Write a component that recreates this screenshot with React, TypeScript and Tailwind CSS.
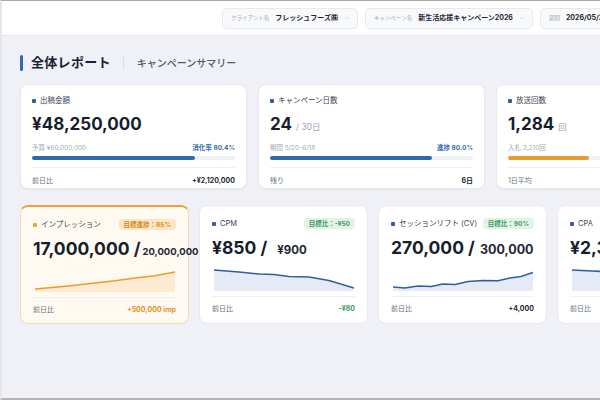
import { ChevronDown } from "lucide-react"

const font = { fontFamily: '"Inter", "Noto Sans CJK JP", sans-serif' }

function Pill({ label, value }: { label: string; value: string }) {
  return (
    <div className="flex h-[21px] shrink-0 items-center gap-[6px] rounded-[5px] border border-[#e6e9ef] bg-[#f8f9fb] pl-[8px] pr-[7px]">
      <span className="text-[5.5px] text-[#a3aab7]">{label}</span>
      <span className="text-[7px] font-bold text-[#1f2736]">{value}</span>
      <ChevronDown className="h-[6px] w-[6px] text-[#b5bcc8]" strokeWidth={2} />
    </div>
  )
}

function Dot({ color }: { color: string }) {
  return <span className={`h-[4px] w-[4px] shrink-0 rounded-[1px] ${color}`} />
}

type TopCardProps = {
  label: string
  big: string
  unit?: string
  subLeft: string
  subRight?: string
  pct: number
  barColor: string
  footLeft: string
  footRight?: string
}

function TopCard(p: TopCardProps) {
  return (
    <div className="flex h-[105px] w-[227px] shrink-0 flex-col rounded-[8px] border border-[#e7e9ee] bg-white px-[11px] pt-[11px] shadow-[0_1px_2px_rgba(20,30,50,0.04)]">
      <div className="flex items-center gap-[4px]">
        <Dot color="bg-[#2f5f9e]" />
        <span className="text-[7.5px] leading-[10px] text-[#3b4454]">{p.label}</span>
      </div>
      <div className="mt-[6px] flex items-baseline gap-[4px]">
        <span className="text-[17px] font-bold leading-[24px] text-[#161e2d]">{p.big}</span>
        {p.unit && <span className="text-[8.5px] text-[#9aa2b0]">{p.unit}</span>}
      </div>
      <div className="mt-[7px] flex items-center justify-between text-[6.5px] leading-[10px]">
        <span className="text-[#a3aab7]">{p.subLeft}</span>
        {p.subRight && <span className="font-bold text-[#2f6aad]">{p.subRight}</span>}
      </div>
      <div className="mt-[3px] h-[3.5px] w-full rounded-full bg-[#eef1f5]">
        <div className={`h-full rounded-full ${p.barColor}`} style={{ width: `${p.pct}%` }} />
      </div>
      <div className="mt-[7px] border-t border-[#eef0f3]" />
      <div className="mt-[8px] flex items-center justify-between text-[7px] leading-[10px]">
        <span className="text-[#6b7484]">{p.footLeft}</span>
        {p.footRight && <span className="font-bold text-[#1f2736]">{p.footRight}</span>}
      </div>
    </div>
  )
}

type KpiProps = {
  label: string
  badge: string
  badgeClass: string
  big: string
  target: string
  targetClass: string
  points: string
  line: string
  fill: string
  footRight: string
  footClass: string
  dot: string
  highlight?: boolean
}

function KpiCard(p: KpiProps) {
  const area = `0,22 ${p.points} 140,22`
  return (
    <div
      className={`flex h-[119px] w-[169px] shrink-0 flex-col rounded-[8px] border px-[12px] pt-[12px] ${
        p.highlight
          ? "border-[#f1dcb6] border-t-[2px] border-t-[#eba43c] bg-[#fffaf1] pt-[10px]"
          : "border-[#e7e9ee] bg-white"
      }`}
    >
      <div className="flex items-center justify-between">
        <div className="flex items-center gap-[4px]">
          <Dot color={p.dot} />
          <span className="text-[7.5px] leading-[10px] text-[#3b4454]">{p.label}</span>
        </div>
        <span className={`rounded-[3px] px-[5px] py-[1.5px] text-[6.5px] font-bold leading-[8px] ${p.badgeClass}`}>{p.badge}</span>
      </div>
      <div className="mt-[7px] flex items-baseline whitespace-nowrap">
        <span className="text-[17.5px] font-bold leading-[24px] text-[#161e2d]">{p.big}</span>
        <span className={`font-bold text-[#1f2736] ${p.targetClass}`}>{p.target}</span>
      </div>
      <svg viewBox="0 0 140 22" className="mt-[9px] ml-[2px] h-[22px] w-[140px]" preserveAspectRatio="none">
        <polygon points={area} fill={p.fill} />
        <polyline points={p.points} fill="none" stroke={p.line} strokeWidth="1.6" strokeLinejoin="round" strokeLinecap="round" />
      </svg>
      <div className="mt-[5px] border-t border-[#eef0f3]" />
      <div className="mt-[7px] flex items-center justify-between text-[7px] leading-[10px]">
        <span className="text-[#6b7484]">前日比</span>
        <span className={`font-bold ${p.footClass}`}>{p.footRight}</span>
      </div>
    </div>
  )
}

export default function App() {
  return (
    <div style={font} className="h-[400px] w-[600px] overflow-hidden border-t border-b-2 border-l-2 border-t-[#a8a8a8] border-b-[#b4b4b4] border-l-[#e4e6ea] bg-[#eff1f6]">
      {/* header */}
      <div className="flex h-[35px] items-center gap-[7px] border-b border-[#e6e8ed] bg-white pl-[220px]">
        <Pill label="クライアント名" value="フレッシュフーズ㈱" />
        <Pill label="キャンペーン名" value="新生活応援キャンペーン2026" />
        <Pill label="期間" value="2026/05/20 - 2026/06/18" />
      </div>

      <div className="w-[760px] px-[18px]">
        {/* title */}
        <div className="mt-[19px] flex h-[16px] items-center">
          <span className="h-[16px] w-[3px] rounded-full bg-[#2f6aad]" />
          <span className="ml-[8px] text-[13px] font-bold tracking-[0.3px] text-[#1a2231]">全体レポート</span>
          <span className="ml-[12px] h-[12px] w-px bg-[#d9dce2]" />
          <span className="ml-[13px] text-[10px] font-medium text-[#4f5868]">キャンペーンサマリー</span>
        </div>

        {/* row 1 */}
        <div className="mt-[13px] flex gap-[11px]">
          <TopCard
            label="出稿金額"
            big="¥48,250,000"
            subLeft="予算 ¥60,000,000"
            subRight="消化率 80.4%"
            pct={80.4}
            barColor="bg-[#2f6aad]"
            footLeft="前日比"
            footRight="+¥2,120,000"
          />
          <TopCard
            label="キャンペーン日数"
            big="24"
            unit="/ 30日"
            subLeft="期間 5/20-6/18"
            subRight="進捗 80.0%"
            pct={80}
            barColor="bg-[#2f6aad]"
            footLeft="残り"
            footRight="6日"
          />
          <TopCard
            label="放送回数"
            big="1,284"
            unit="回"
            subLeft="入札 3,210回"
            pct={40}
            barColor="bg-[#e99c2e]"
            footLeft="1日平均"
            footRight="53回"
          />
        </div>

        {/* row 2 */}
        <div className="mt-[16px] flex gap-[10px]">
          <KpiCard
            highlight
            dot="bg-[#eba43c]"
            label="インプレッション"
            badge="目標進捗：85%"
            badgeClass="bg-[#fbe5c2] text-[#d9892a]"
            big="17,000,000 /"
            target="20,000,000"
            targetClass="text-[9.5px] ml-[2px]"
            points="0,19 20,17.2 40,15.3 60,13 80,10.8 100,8 120,5.8 140,2"
            line="#e99c2e"
            fill="#fcebd2"
            footRight="+500,000 imp"
            footClass="text-[#e28f25]"
          />
          <KpiCard
            dot="bg-[#2f5f9e]"
            label="CPM"
            badge="目標比：-¥50"
            badgeClass="bg-[#e2f4e9] text-[#3d9a66]"
            big="¥850 /"
            target="¥900"
            targetClass="text-[11.5px] ml-[10px]"
            points="0,1 25,3 45,5 60,5.5 75,7.5 95,8 115,11.5 140,19"
            line="#2f5f9e"
            fill="#e4ebf6"
            footRight="-¥80"
            footClass="text-[#3d9a66]"
          />
          <KpiCard
            dot="bg-[#2f5f9e]"
            label="セッションリフト (CV)"
            badge="目標比：90%"
            badgeClass="bg-[#e2f4e9] text-[#3d9a66]"
            big="270,000 /"
            target="300,000"
            targetClass="text-[12.5px] ml-[5px]"
            points="0,18 12,19 25,17 38,17.5 50,15 62,15.5 75,12.5 90,11.5 105,11.8 117,9 128,7.5 140,3.5"
            line="#2f5f9e"
            fill="#e4ebf6"
            footRight="+4,000"
            footClass="text-[#1f2736]"
          />
          <KpiCard
            dot="bg-[#2f5f9e]"
            label="CPA"
            badge="目標比：-¥200"
            badgeClass="bg-[#e2f4e9] text-[#3d9a66]"
            big="¥2,300 /"
            target="¥2,500"
            targetClass="text-[11.5px] ml-[8px]"
            points="0,1 20,2 40,3 60,4 80,6 100,8 120,10 140,14"
            line="#2f5f9e"
            fill="#e4ebf6"
            footRight="-¥120"
            footClass="text-[#3d9a66]"
          />
        </div>
      </div>
    </div>
  )
}
